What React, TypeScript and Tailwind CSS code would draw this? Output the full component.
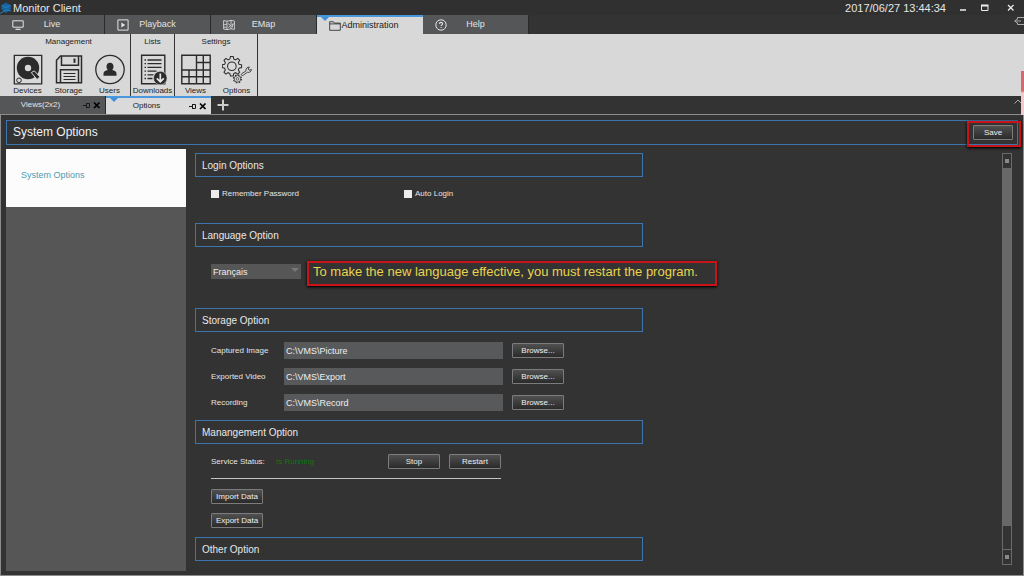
import React from "react";

type IconProps = { className?: string };

function Logo() {
  return (
    <svg className="h-3 w-3 shrink-0" viewBox="0 0 12 12">
      <path d="M6 0.5 10.5 3 11 7 6 11 1.5 7.5 1.5 3Z" fill="#16639f" />
      <path d="M2 3.5 6 5.5 10.5 3.5M0 11.5 6 8 11 9" stroke="#2a7fc0" strokeWidth="1" fill="none" />
    </svg>
  );
}

function MonitorIcon({ className }: IconProps) {
  return (
    <svg className={className} viewBox="0 0 12 12" fill="none" stroke="currentColor">
      <path d="M0.8 1.8h10.4v6.4H0.8z" />
      <path d="M3.5 10.3h5" strokeWidth="1.2" />
    </svg>
  );
}

function PlaybackIcon({ className }: IconProps) {
  return (
    <svg className={className} viewBox="0 0 12 12" fill="none" stroke="currentColor">
      <path d="M0.9 0.9h10.2v10.2H0.9z" />
      <path d="M4.4 3.6v4.8l3.8-2.4z" fill="currentColor" stroke="none" />
    </svg>
  );
}

function MapIcon({ className }: IconProps) {
  return (
    <svg className={className} viewBox="0 0 12 12" fill="none" stroke="currentColor" strokeWidth="0.8">
      <path d="M0.6 1.6 4 2.2 8 1.4l3.4 0.6v8.4L8 9.8l-4 0.8-3.4-0.6zM4 2.2v8.4M8 1.4v8.4M0.6 6l3.4-1M1 8.2h2.5M5 4.5l2.4 2-2 2.2M11.2 5H9.4v3.4" />
    </svg>
  );
}

function FolderIcon({ className }: IconProps) {
  return (
    <svg className={className} viewBox="0 0 12 12" fill="none" stroke="currentColor" strokeWidth="0.8">
      <path d="M0.7 10.3V1.7h3.6l1 1.4h6v7.2zM0.7 3.9h10.6" />
    </svg>
  );
}

function HelpIcon({ className }: IconProps) {
  return (
    <svg className={className} viewBox="0 0 12 12" fill="none" stroke="currentColor">
      <circle cx="6" cy="6" r="5.2" />
      <path d="M4.5 4.9C4.5 2.9 7.6 2.9 7.6 4.8 7.6 5.8 6.1 5.9 6.1 7.1M6.1 8v1.1" strokeWidth="1.1" />
    </svg>
  );
}

function DeviceIcon({ className }: IconProps) {
  return (
    <svg className={className} viewBox="0 0 30 30" fill="none" stroke="currentColor" strokeWidth="1.3">
      <path d="M1.3 0.8h27.4v28.6H1.3z" />
      <circle cx="15" cy="13.5" r="11.2" fill="currentColor" stroke="none" />
      <circle cx="15" cy="13.5" r="3.2" fill="#d8d8d8" stroke="none" />
      <path d="M18.3 18 24 25l3-2.6-5.6-6z" fill="currentColor" stroke="#d8d8d8" strokeWidth="1" />
      <circle cx="6" cy="25.8" r="2.3" strokeWidth="1" />
    </svg>
  );
}

function FloppyIcon({ className }: IconProps) {
  return (
    <svg className={className} viewBox="0 0 30 30" fill="none" stroke="currentColor" strokeWidth="1.5">
      <path d="M6.5 1.5h21v26.7h-25V5.8z" />
      <path d="M7.5 1.5v9.3h17V1.5M6.5 28v-12.7h18V28" />
      <path d="M20.5 4v4.3" strokeWidth="2" />
      <path d="M9.5 19h12M9.5 22h12M9.5 25h12" strokeWidth="1.2" />
    </svg>
  );
}

function UserIcon({ className }: IconProps) {
  return (
    <svg className={className} viewBox="0 0 30 30" fill="none" stroke="currentColor" strokeWidth="1.3">
      <circle cx="15" cy="15" r="14.2" />
      <path d="M15 8.3c2.2 0 3.5 1.6 3.5 3.8 0 1.5-.5 2.6-1.3 3.3 2.6.8 4.3 1.6 4.3 3.6v2.3H8.500V19c0-2 1.700-2.800 4.300-3.600-.8-.7-1.300-1.800-1.300-3.300 0-2.200 1.300-3.800 3.500-3.800z" fill="currentColor" stroke="none" />
    </svg>
  );
}

function DownloadIcon({ className }: IconProps) {
  return (
    <svg className={className} viewBox="0 0 30 30" fill="none" stroke="currentColor">
      <path d="M3.6 0.8h23.2v28.4H3.6z" strokeWidth="1.4" />
      <path d="M6.5 5.5h1.5M9.5 5.5h14M6.5 9.2h1.5M9.5 9.2h14M6.5 12.9h1.5M9.5 12.9h14M6.5 16.6h1.5M9.5 16.6h9M6.5 20.3h1.5M9.5 20.3h6M6.5 24h1.5M9.5 24h5" strokeWidth="1.3" />
      <circle cx="22.3" cy="23.5" r="6.8" fill="currentColor" stroke="#d8d8d8" strokeWidth="0.6" />
      <path d="M22.3 19v8M18.8 23.8l3.5 3.6 3.5-3.6" stroke="#e8e8e8" strokeWidth="1.7" />
    </svg>
  );
}

function GridIcon({ className }: IconProps) {
  return (
    <svg className={className} viewBox="0 0 30 30" fill="none" stroke="currentColor" strokeWidth="1.4">
      <path d="M0.8 0.8h28.4v28.4H0.8zM15.5 0.8v28.4M22.3 0.8v28.4M8 15.5v13.7M0.8 15.5h28.4M0.8 22.3h28.4M15.5 8h13.7" />
    </svg>
  );
}

function GearsIcon({ className }: IconProps) {
  return (
    <svg className={className} viewBox="0 0 32 30" fill="none" stroke="currentColor">
      <path
        d="M9 1.2h3l.5 2.6 2 .9 2.3-1.5 2.1 2.1-1.5 2.3.8 1.9 2.7.5v3l-2.7.6-.8 1.9 1.5 2.3-2.1 2.1-2.3-1.5-2 .9-.5 2.6H9l-.6-2.6-1.9-.9-2.3 1.5-2.1-2.1 1.5-2.3-.8-1.9-2.5-.6v-3l2.5-.5.8-1.9-1.5-2.3 2.1-2.1 2.3 1.5 1.9-.9z"
        strokeWidth="1.1"
      />
      <circle cx="10.5" cy="11.5" r="4.6" strokeWidth="1.1" />
      <circle cx="16.5" cy="25" r="3.5" strokeWidth="0.8" />
      <circle cx="16.5" cy="25" r="4.3" strokeWidth="1.1" strokeDasharray="1.7 1.68" />
      <circle cx="16.5" cy="25" r="1.4" strokeWidth="0.7" />
      <path d="M21 19.5l4.6-3c-.4-2.4 1.3-4.3 3.7-4.1l-1.5 2 1.2 1.3 2.3-.7c0 2.3-2 3.6-4.3 2.9l-4.3 3.2c-1.7 1-2.9-.5-1.7-1.6z" strokeWidth="0.9" />
    </svg>
  );
}

const mainTabs = [
  { label: "Live", icon: MonitorIcon },
  { label: "Playback", icon: PlaybackIcon },
  { label: "EMap", icon: MapIcon },
  { label: "Administration", icon: FolderIcon, active: true },
  { label: "Help", icon: HelpIcon },
];

const ribbon = [
  {
    title: "Management",
    pad: "pl-[7px]",
    items: [
      { label: "Devices", icon: DeviceIcon },
      { label: "Storage", icon: FloppyIcon },
      { label: "Users", icon: UserIcon },
    ],
  },
  { title: "Lists", pad: "px-px", items: [{ label: "Downloads", icon: DownloadIcon }] },
  {
    title: "Settings",
    pad: "",
    items: [
      { label: "Views", icon: GridIcon },
      { label: "Options", icon: GearsIcon },
    ],
  },
];

function Marker() {
  return (
    <span className="absolute top-0 left-1 border-x-4 border-t-4 border-x-transparent border-t-[#3f8fdc]" />
  );
}

function DocTab({ label, active }: { label: string; active?: boolean }) {
  return (
    <div
      className={
        active
          ? "relative flex w-[105px] items-center border-t-2 border-[#4a97de] bg-[#dadada] pr-0.5 text-[#222]"
          : "relative flex w-[106px] items-center border-r border-[#2a2a2a] bg-[#555658] pr-0.5 text-[#e4e4e4]"
      }
    >
      {active && <Marker />}
      <button className="h-full flex-1 pr-0.5 text-center">{label}</button>
      <button aria-label={"Pin " + label} className="w-2.5 text-[#1a1a1a]">
        <svg className="h-2 w-2" viewBox="0 0 8 8" fill="none" stroke="currentColor">
          <path d="M0 4.5h3M3.5 2v5M3.5 2.5h3v4h-3" />
        </svg>
      </button>
      <button aria-label={"Close " + label} className="w-2.5 text-black">
        <svg className="h-2 w-2" viewBox="0 0 8 8" stroke="currentColor" strokeWidth="1.7">
          <path d="M1 1.5 6.5 7M6.5 1.5 1 7" />
        </svg>
      </button>
    </div>
  );
}

function PushButton({ children, className }: { children: React.ReactNode; className: string }) {
  return (
    <button
      className={
        "h-[15px] shrink-0 rounded-[1px] border border-[#7c7c7c] bg-linear-to-b from-[#505050] to-[#2b2b2b] leading-3 whitespace-nowrap text-[#eee] " +
        className
      }
    >
      {children}
    </button>
  );
}

function Section({ title, className, children }: { title: string; className?: string; children?: React.ReactNode }) {
  return (
    <section className={className}>
      <h2 className="flex h-6 w-full max-w-[448px] items-center border border-[#3c75ad] px-1.5 text-[10px] text-[#e8e8e8]">
        {title}
      </h2>
      <div className="pl-4">{children}</div>
    </section>
  );
}

const paths = [
  { id: "captured", label: "Captured Image", value: "C:\\VMS\\Picture" },
  { id: "exported", label: "Exported Video", value: "C:\\VMS\\Export" },
  { id: "recording", label: "Recording", value: "C:\\VMS\\Record" },
];

export default function App() {
  return (
    <div className="flex min-h-screen flex-col bg-[#333] font-['Liberation_Sans',Arial,sans-serif] text-[8px] text-[#e4e4e4]">
      <header className="flex h-[15px] items-center bg-[#303030] pr-2 text-[11px] text-[#e6e6e6]">
        <Logo />
        <span className="flex-1 pl-px leading-3">Monitor Client</span>
        <time className="leading-3">2017/06/27 13:44:34</time>
        <div className="flex items-center gap-3 pl-3">
          <button aria-label="Minimize">
            <svg className="block h-2.5 w-2.5" viewBox="0 0 10 10" stroke="#eee" strokeWidth="1.5">
              <path d="M2 7h6" />
            </svg>
          </button>
          <button aria-label="Maximize">
            <svg className="block h-2.5 w-2.5" viewBox="0 0 10 10" stroke="#eee" fill="none">
              <path d="M1.5 3v4.5h6.5V3" />
              <path d="M1 2.5h7.5" strokeWidth="2" />
            </svg>
          </button>
          <button aria-label="Close" className="pl-1">
            <svg className="block h-2.5 w-2.5" viewBox="0 0 10 10" stroke="#eee" strokeWidth="1.2">
              <path d="M2 2 7.5 7.5M7.5 2 2 7.5" />
            </svg>
          </button>
        </div>
      </header>

      <nav className="flex h-[19px] text-[9px]">
        {mainTabs.map(({ label, icon: Icon, active }) => (
          <button
            key={label}
            className={
              active
                ? "relative flex w-[106px] items-center border-t-2 border-[#4a97de] bg-[#d8d8d8] px-3 text-[#222]"
                : "flex w-[105px] items-center border-r border-[#2a2a2a] bg-[#555658] px-3 text-[#e4e4e4] not-first:w-[106px]"
            }
          >
            {active && <Marker />}
            <Icon className="h-3 w-3 shrink-0" />
            <span className="flex-1 pr-3 text-center">{label}</span>
          </button>
        ))}
        <button aria-label="Log out" className="ml-auto self-start pt-px text-[#aaa]">
          <svg className="block h-2.5 w-2.5" viewBox="0 0 10 10" fill="none" stroke="currentColor">
            <path d="M3.5 3.5V1.5H10M3.5 6.5v2H10M0.5 5H7M3 3 0.8 5 3 7" />
          </svg>
        </button>
      </nav>

      <div className="relative flex h-[62px] bg-[#d8d8d8] text-[#1d1d1d]">
        {ribbon.map((group) => (
          <div key={group.title} className={"flex flex-col border-r border-[#333] pt-0.5 " + group.pad}>
            <h3 className="text-center leading-3">{group.title}</h3>
            <div className="flex pt-1.5">
              {group.items.map(({ label, icon: Icon }) => (
                <button key={label} className="flex w-[41px] flex-col items-center leading-3">
                  <Icon className="h-[31px] w-[30px] text-[#2b2b2b]" />
                  {label}
                </button>
              ))}
            </div>
          </div>
        ))}
        <div className="absolute top-[37px] right-0 h-11 w-[3px] bg-linear-to-b from-[#d8686c] from-45% to-[#f3c8ca] to-50%" />
      </div>

      <div className="flex h-[18px] items-stretch">
        <DocTab label="Views(2x2)" />
        <DocTab label="Options" active />
        <button aria-label="New tab" className="px-1.5">
          <svg className="h-3 w-3" viewBox="0 0 12 12" stroke="#ccc" strokeWidth="2">
            <path d="M6 0.5v11M0.5 6h11" />
          </svg>
        </button>
        <button aria-label="Collapse ribbon" className="ml-auto self-start px-0.5 pt-0.5">
          <svg className="block h-2 w-2" viewBox="0 0 8 8" fill="none" stroke="#aaa">
            <path d="M0.5 5.5 4 2l3.5 3.5" />
          </svg>
        </button>
      </div>

      <main className="flex flex-1 flex-col border border-[#8c8c8c] px-[5px] pt-[5px] pb-1">
        <div className="relative flex h-[25px] items-center justify-between border border-[#3c75ad] pr-1 pl-1.5">
          <h1 className="pb-0.5 text-[12px] text-[#f0f0f0]">System Options</h1>
          <PushButton className="w-10">Save</PushButton>
          <div className="pointer-events-none absolute top-0 -right-1 h-[26px] w-[54px] border-2 border-[#c81418] shadow-sm shadow-black" />
        </div>

        <div className="flex flex-1 pt-1">
          <aside className="w-[180px] shrink-0 bg-[#565656]">
            <a
              href="#system-options"
              className="flex h-[58px] items-center bg-[#fcfcfc] px-[15px] pb-1 text-[9px] text-[#4f9bb4]"
            >
              System Options
            </a>
          </aside>

          <div className="min-w-0 flex-1 pt-1 pl-[9px]">
            <Section title="Login Options" className="h-[70px]">
              <div className="flex pt-2.5">
                <label className="flex h-3.5 w-[193px] items-center gap-[3px]">
                  <input type="checkbox" className="h-2 w-2 appearance-none bg-[#ececec] checked:bg-[#3c75ad]" />
                  Remember Password
                </label>
                <label className="flex h-3.5 items-center gap-[3px]">
                  <input type="checkbox" className="h-2 w-2 appearance-none bg-[#ececec] checked:bg-[#3c75ad]" />
                  Auto Login
                </label>
              </div>
            </Section>

            <Section title="Language Option" className="h-[85px]">
              <div className="flex items-start gap-1.5 pt-3.5">
                <div className="relative mt-[3px]">
                  <select
                    aria-label="Language"
                    className="block h-[15px] w-[90px] appearance-none bg-[#565656] px-0.5 text-[9px] leading-3 text-[#eee]"
                  >
                    <option>Français</option>
                    <option>English</option>
                  </select>
                  <span className="pointer-events-none absolute top-1 right-0.5 border-x-4 border-t-4 border-x-transparent border-t-[#777]" />
                </div>
                <p className="flex h-[25px] w-[410px] items-center border-2 border-[#c81418] px-1 pb-1 text-[13px] whitespace-nowrap text-[#e8d44f] shadow-sm shadow-black">
                  To make the new language effective, you must restart the program.
                </p>
              </div>
            </Section>

            <Section title="Storage Option" className="h-28">
              <div className="flex flex-col gap-[9px] pt-2.5">
                {paths.map(({ id, label, value }) => (
                  <div key={id} className="flex items-center">
                    <label htmlFor={id} className="w-[73px]">
                      {label}
                    </label>
                    <input
                      id={id}
                      defaultValue={value}
                      className="h-[17px] w-[219px] bg-[#58595b] px-0.5 text-[9px] text-[#eee]"
                    />
                    <PushButton className="ml-[9px] w-[52px]">Browse...</PushButton>
                  </div>
                ))}
              </div>
            </Section>

            <Section title="Manangement Option" className="h-[117px]">
              <div className="flex w-[290px] items-center border-b border-[#c4c4c4] pt-2.5 pb-[9px]">
                <span className="w-[65px]">Service Status:</span>
                <span className="flex-1 text-[#0c780c]">Is Running</span>
                <PushButton className="mr-[9px] w-[52px]">Stop</PushButton>
                <PushButton className="w-[52px]">Restart</PushButton>
              </div>
              <div className="flex flex-col items-start gap-[9px] pt-2.5">
                <PushButton className="w-[52px]">Import Data</PushButton>
                <PushButton className="w-[52px]">Export Data</PushButton>
              </div>
            </Section>

            <Section title="Other Option" />
          </div>

          <div className="flex w-4 shrink-0 flex-col pt-1 pb-1.5">
            <div className="flex w-2.5 flex-1 flex-col border border-[#6a6a6a]">
              <button aria-label="Scroll up" className="flex h-3.5 items-center justify-center">
                <span className="h-1 w-1 bg-[#8a8a8a]" />
              </button>
              <div className="flex-1 bg-[#686868]" />
              <div className="h-6 border-b border-[#6a6a6a]" />
              <button aria-label="Scroll down" className="flex h-3.5 items-center justify-center">
                <span className="h-1 w-1 bg-[#8a8a8a]" />
              </button>
            </div>
          </div>
        </div>
      </main>
    </div>
  );
}
